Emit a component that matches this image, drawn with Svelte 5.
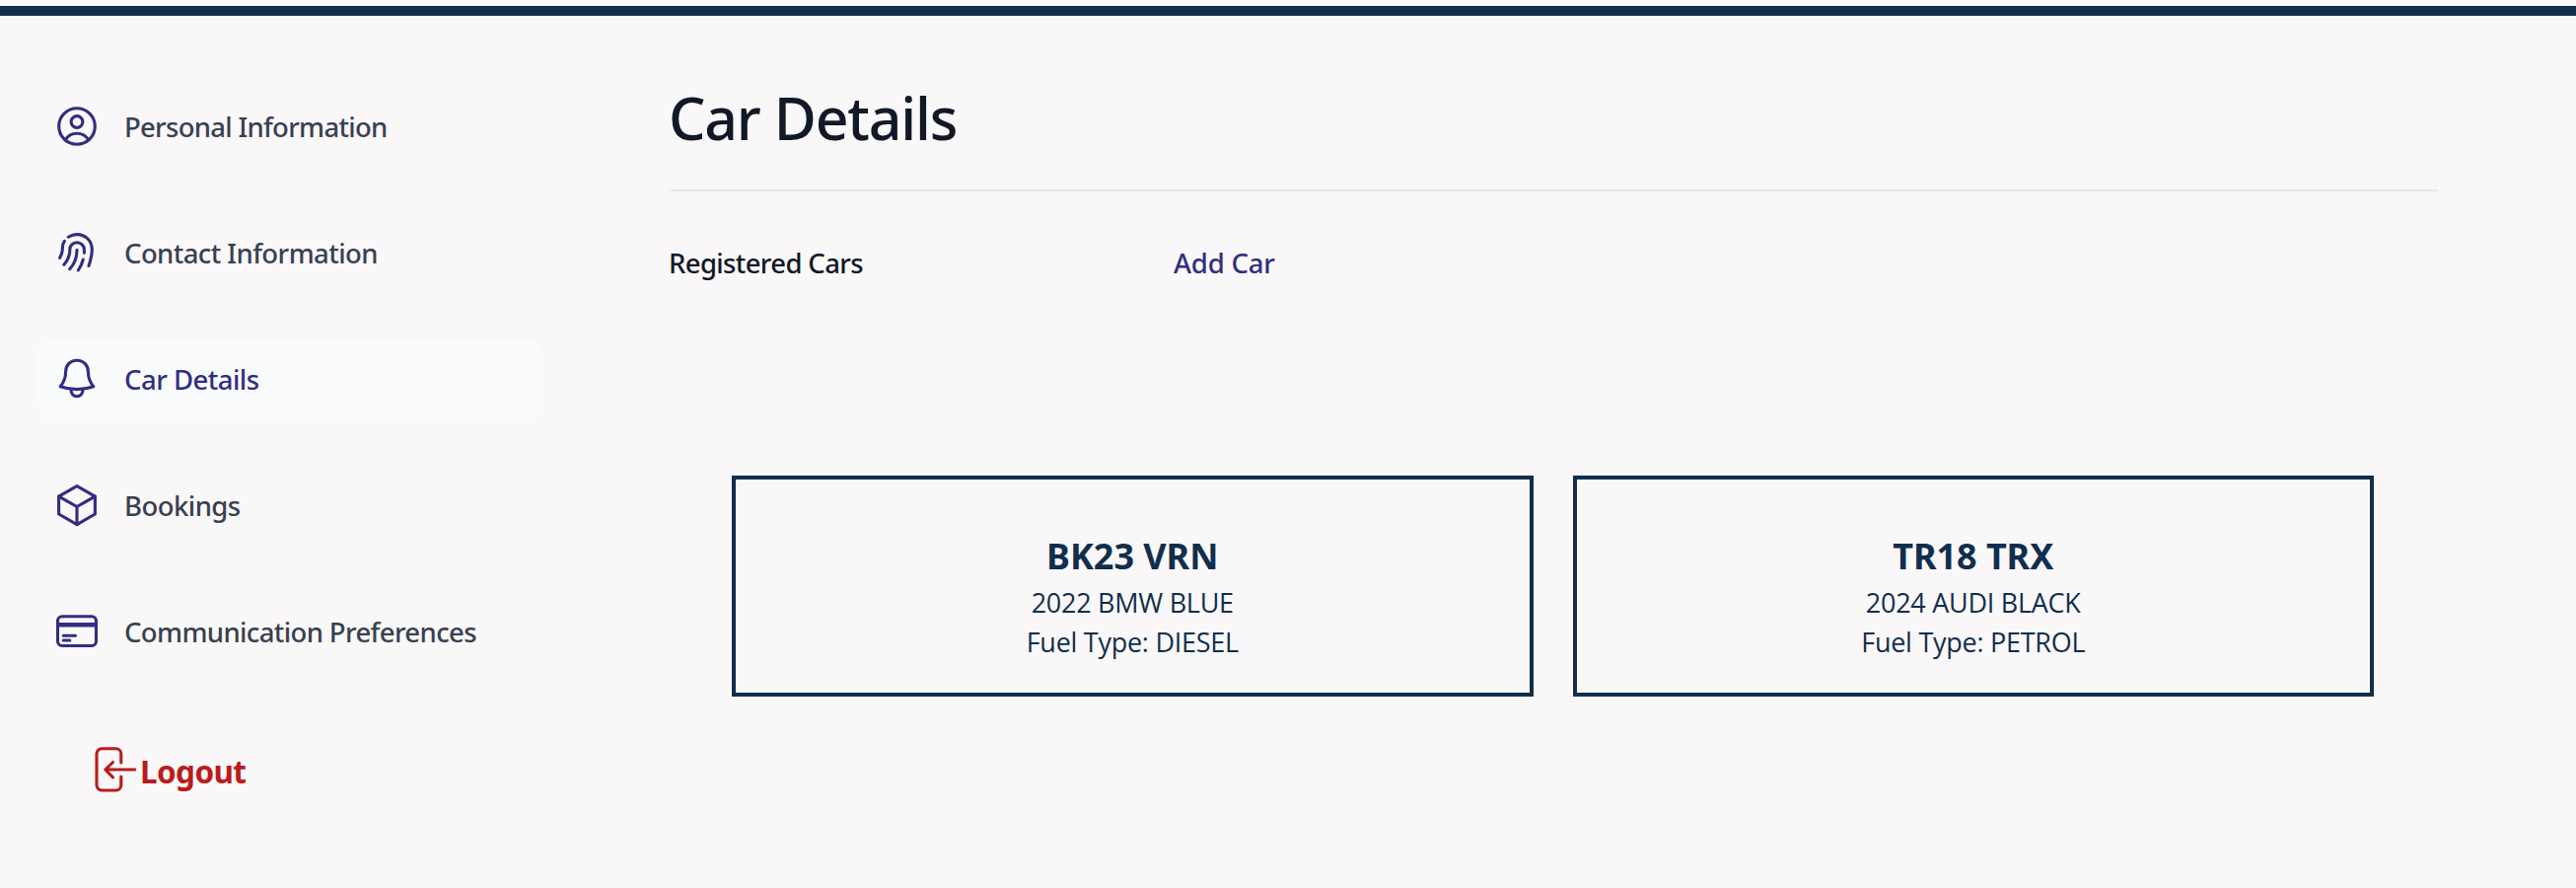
<script>
  const navItems = [
    { label: 'Personal Information', icon: 'user', tracking: -0.72 },
    { label: 'Contact Information', icon: 'fingerprint', tracking: -0.58 },
    { label: 'Car Details', icon: 'bell', tracking: -0.52 },
    { label: 'Bookings', icon: 'cube', tracking: -0.55 },
    { label: 'Communication Preferences', icon: 'card', tracking: -0.63 }
  ];
  const cars = [
    { plate: 'BK23 VRN', summary: '2022 BMW BLUE', fuel: 'DIESEL' },
    { plate: 'TR18 TRX', summary: '2024 AUDI BLACK', fuel: 'PETROL' }
  ];
  let active = $state('Car Details');
</script>

<div class="page">
  <div class="bar"></div>
  <div class="layout">
    <aside>
      <nav>
        {#each navItems as item}
          <button class="nav-item" class:active={active === item.label} onclick={() => (active = item.label)}>
            <svg viewBox="0 0 48 48" aria-hidden="true">
              {#if item.icon === 'user'}
                <circle cx="24" cy="24" r="18.3" />
                <circle cx="24" cy="19.5" r="5.9" />
                <path d="M12.2 38C15 33.3 19.5 31.3 24 31.3S33 33.3 35.8 38" />
              {:else if item.icon === 'fingerprint'}
                <path d="M15.3 8.2Q19.5 5.6 24 5.6C33 5.6 39.3 12.3 39.3 21C39.3 27 37.8 32 36 37.5" />
                <path d="M11.3 12.3C9 15.5 9.5 18 9.3 21C9 24.5 8 27 6.7 29.3" />
                <path d="M31.4 24.3V21C31.4 17 28.2 13.8 24 13.8S16.8 17 16.8 21C17 27.5 14.5 32 10.9 36.3" />
                <path d="M24 21.3C24 29 22 35 16.7 40.7" />
                <path d="M30.3 31C29.3 35 27.5 38.7 25.3 42" />
              {:else if item.icon === 'bell'}
                <path d="M24 5.2C17 5.2 12.6 10.3 12.6 17C12.6 24 10.8 27.5 7.2 31.7Q15.5 34.6 24 34.6T40.8 31.7C37.2 27.5 35.4 24 35.4 17C35.4 10.3 31 5.2 24 5.2Z" />
                <path d="M18 35C18 39 20.5 41.7 24 41.7S30 39 30 35" />
              {:else if item.icon === 'cube'}
                <path d="M24 4.6L42.4 15.2V33L24 43.6L5.6 33V15.2Z" />
                <path d="M5.6 15.2L24 25.5L42.4 15.2M24 25.5V43.6" />
              {:else}
                <rect x="4.5" y="8.8" width="39" height="29.7" rx="4.5" />
                <path class="stripe" d="M4.5 17.3H43.5" />
                <path d="M10.3 28.3H22.5M10.3 33H16.8" />
              {/if}
            </svg>
            <span style="letter-spacing: {item.tracking}px">{item.label}</span>
          </button>
        {/each}
      </nav>
      <button class="logout">
        <svg viewBox="0 0 48 48" aria-hidden="true">
          <path d="M30.8 17V8A5.2 5.2 0 0 0 25.6 2.8H11.2A5.2 5.2 0 0 0 6 8V39.8A5.2 5.2 0 0 0 11.2 45H25.6A5.2 5.2 0 0 0 30.8 39.8V31" />
          <path d="M44.8 24H14.8M22.5 16.5L14.8 24L22.5 31.8" />
        </svg>
        <span>Logout</span>
      </button>
    </aside>

    <main>
      <h1>Car Details</h1>
      <hr />
      <div class="subhead">
        <span class="registered">Registered Cars</span>
        <a href="#add">Add Car</a>
      </div>
      <div class="cards">
        {#each cars as car}
          <article>
            <h2>{car.plate}</h2>
            <p>{car.summary}</p>
            <p>Fuel Type: {car.fuel}</p>
          </article>
        {/each}
      </div>
    </main>
  </div>
</div>

<style>
  :global(body) {
    margin: 0;
    background: #f9f7f8;
  }
  .page {
    box-sizing: border-box;
    min-height: 900px;
    padding-top: 6px;
    background: #f9f7f8;
    font-family: 'Noto Sans', 'Open Sans', sans-serif;
    font-size: 27.5px;
    line-height: 40px;
    color: #111827;
  }
  .bar {
    height: 10px;
    background: #112e4d;
  }
  .layout {
    display: flex;
    gap: 128px;
    padding: 66px 141px 0 38px;
  }
  aside {
    flex: none;
    width: 512px;
    padding-top: 6px;
  }
  nav {
    display: flex;
    flex-direction: column;
    gap: 48px;
  }
  button {
    border: 0;
    background: none;
    font: inherit;
    text-align: left;
    cursor: pointer;
  }
  svg {
    flex: none;
    width: 48px;
    height: 48px;
    fill: none;
    stroke: currentColor;
    stroke-width: 3.1;
    stroke-linecap: round;
    stroke-linejoin: round;
  }
  .stripe {
    stroke-width: 4.6;
    stroke-linecap: butt;
  }
  .nav-item {
    display: flex;
    align-items: center;
    gap: 24px;
    height: 80px;
    padding: 0 16px;
    border-radius: 14px;
    color: #374151;
    font-weight: 500;
    white-space: nowrap;
  }
  .nav-item span {
    padding-top: 2px;
  }
  .nav-item svg {
    color: #312e81;
  }
  .nav-item.active {
    background: #f8fafc;
    color: #312e81;
  }
  .logout {
    display: flex;
    align-items: center;
    gap: 2px;
    height: 48px;
    margin: 76px 0 0 54px;
    padding: 0;
    color: #b91c1c;
    font-size: 31.5px;
    font-weight: 700;
    letter-spacing: -0.6px;
  }
  .logout span {
    padding-top: 3px;
  }
  main {
    flex: 1;
    min-width: 0;
  }
  h1 {
    margin: 0;
    padding-top: 1px;
    font-size: 59px;
    line-height: 72px;
    font-weight: 500;
    letter-spacing: -1.2px;
  }
  hr {
    height: 2px;
    margin: 37px 0 53px;
    border: 0;
    background: #e5e7eb;
  }
  .subhead {
    display: grid;
    grid-template-columns: 512px 1fr;
    font-weight: 500;
  }
  .registered {
    letter-spacing: -0.64px;
  }
  a {
    color: #312e81;
    text-decoration: none;
    letter-spacing: -0.2px;
  }
  .cards {
    display: grid;
    grid-template-columns: 1fr 1fr;
    gap: 40px;
    margin-top: 195px;
    padding: 0 64px;
  }
  article {
    box-sizing: border-box;
    height: 224px;
    padding-top: 51px;
    border: 4px solid #112e4d;
    color: #112e4d;
    text-align: center;
  }
  h2 {
    margin: 0;
    font-size: 36px;
    line-height: 54px;
    font-weight: 700;
    letter-spacing: -0.05px;
  }
  p {
    margin: 0;
    font-family: 'Open Sans', 'Noto Sans', sans-serif;
    font-size: 27px;
    font-weight: 400;
    letter-spacing: -0.27px;
  }
</style>
